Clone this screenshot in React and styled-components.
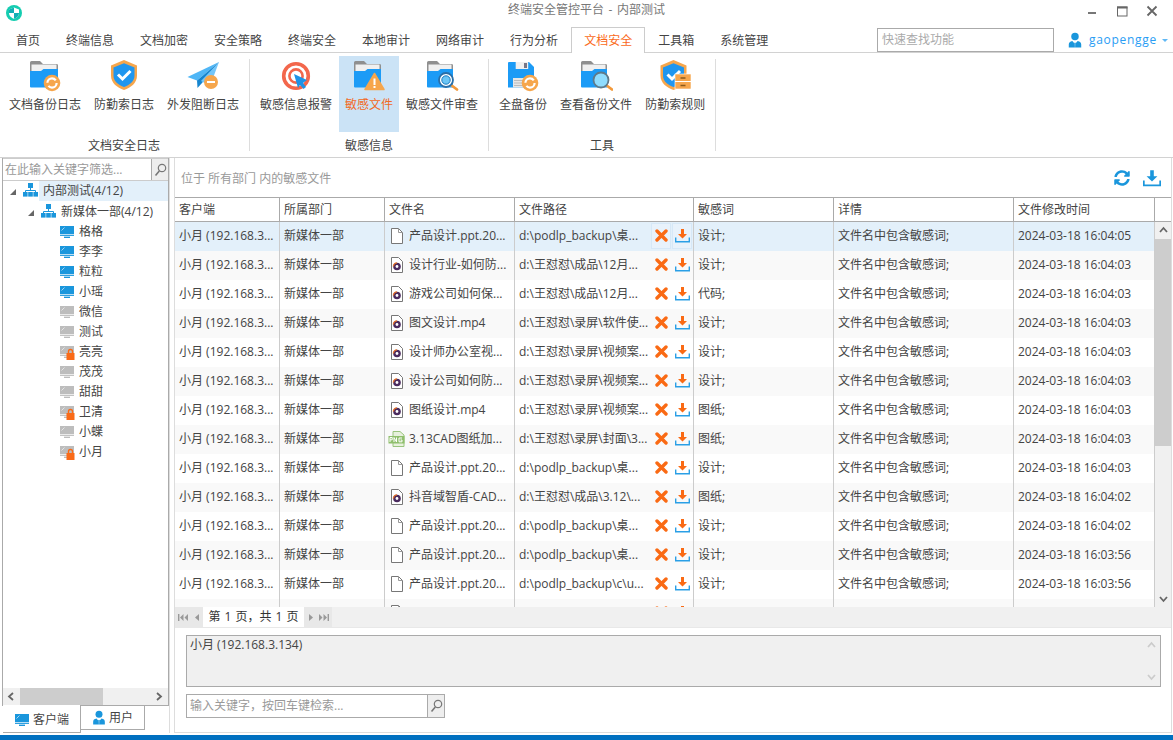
import React from "react";
import styled, { createGlobalStyle } from "styled-components";
import { FaSyncAlt } from "react-icons/fa";

const FONT = `"Open Sans", "Noto Sans CJK SC", sans-serif`;

const Global = createGlobalStyle`
  html, body { margin: 0; padding: 0; background: #fff; overflow: hidden; }
  * { box-sizing: border-box; }
  body { font: 12px/16px ${FONT}; color: #444; }
`;

const Win = styled.div`
  width: 1173px; height: 740px; display: flex; flex-direction: column; background: #fff; overflow: hidden;
`;
const TitleBar = styled.div`
  height: 27px; display: grid; grid-template-columns: 1fr auto 1fr; align-items: start; flex: none;
`;
const TitleLeft = styled.div`padding: 4px 0 0 5px; display: flex;`;
const TitleText = styled.div`color: #777; padding-top: 2px; line-height: 16px; word-spacing: 1.5px;`;
const WinControls = styled.div`display: flex; justify-content: flex-end; padding: 5px 15px 0 0; gap: 18px;`;

const TabBar = styled.div`
  height: 26px; flex: none; display: flex; padding-left: 3px; border-bottom: 1px solid #d2d2d2; position: relative;
`;
const Tab = styled.div`
  padding: 0 ${p => (p.$active ? 12 : 13)}px; height: ${p => (p.$active ? 26 : 25)}px; line-height: 27px; color: ${p => (p.$active ? "#fa6a1a" : "#444")};
  background: #fff;
  ${p => p.$active && `border: 1px solid #ccc; border-bottom: none; line-height: 25px;`}
`;
const TabSpacer = styled.div`flex: 1;`;
const QuickFind = styled.div`
  width: 177px; height: 24px; margin-top: 1px; border: 1px solid #aaa; color: #aaa; padding-left: 4px; line-height: 22px;
`;
const UserBox = styled.div`
  width: 119px; display: flex; padding-left: 13px; gap: 6px; align-items: flex-start; color: #2a9df4; height: 24px; line-height: 26px;
  font-size: 12px; letter-spacing: 0.7px;
`;
const UserIconSlot = styled.span`display: flex; margin-top: 5px; flex: none;`;
const UserCaret = styled.span`
  width: 0; height: 0; border: 3px solid transparent; border-top: 3px solid #5fb8f5; margin: 12px 0 0 -1px;
`;

const Ribbon = styled.div`
  height: 105px; flex: none; display: flex; padding-top: 3px; border-bottom: 1px solid #d2d2d2;
`;
const RibbonGroup = styled.div`
  display: flex; flex-direction: column; height: 92px; margin-top: 3px; padding: 0 4px; border-right: 1px solid #ddd;
  &:first-child { padding-left: 3px; }
`;
const RibbonButtons = styled.div`display: flex; gap: 1px; height: 76px; margin-top: -3px;`;
const RibbonBtn = styled.div`
  padding: 4px 6px 0; display: flex; flex-direction: column; align-items: center; height: 76px;
  color: ${p => (p.$active ? "#f26a25" : "#444")}; background: ${p => (p.$active ? "#cbe3f6" : "transparent")};
`;
const RibbonIcon = styled.svg`width: 34px; height: 32px; margin-bottom: 5px; display: block; flex: none;`;
const RibbonLabel = styled.div`white-space: nowrap; line-height: 16px;`;
const GroupLabel = styled.div`text-align: center; margin-top: 6px; line-height: 16px;`;

const Body = styled.div`flex: 1; display: flex; min-height: 0;`;
const LeftCol = styled.div`
  width: 170px; flex: none; border-right: 1px solid #ddd; display: flex; flex-direction: column; margin-bottom: 2px;
`;
const TreePanel = styled.div`
  flex: 1; margin-left: 2px; border: 1px solid #aaa; border-top: none; display: flex; flex-direction: column; min-height: 0; width: 167px;
`;
const TreeSearch = styled.div`
  height: 23px; display: flex; border: 1px solid #ccc; border-left: none; border-right: none; flex: none;
`;
const TreeSearchText = styled.div`flex: 1; color: #999; padding-left: 2px; line-height: 21px; white-space: nowrap;`;
const SearchBtn = styled.div`
  width: 17px; flex: none; background: #eee; border-left: 1px solid #aaa; display: flex; align-items: center; justify-content: center;
`;
const Tree = styled.div`flex: 1; min-height: 0;`;
const TreeRow = styled.div`
  height: ${p => p.$h || 20}px; display: flex; align-items: flex-start; padding-left: ${p => p.$indent}px; line-height: 20px; white-space: nowrap;
`;
const Twist = styled.span`
  width: 0; height: 0; flex: none; border-style: solid; border-width: 0 0 6px 6px; border-color: transparent transparent #666 transparent; margin: 8px 7px 0 0;
`;
const TreeIconSlot = styled.span`display: flex; flex: none; margin-top: 2px; margin-right: ${p => p.$mr || 0}px;`;
const TreeName = styled.span`
  flex: ${p => (p.$sel ? 1 : "none")}; background: ${p => (p.$sel ? "#e3f0fa" : "transparent")}; height: 20px; padding-left: 4px;
`;
const HScroll = styled.div`
  height: 17px; background: #f0f0f0; display: flex; align-items: center; flex: none;
`;
const HThumb = styled.div`width: 83px; height: 17px; background: #cdcdcd;`;
const ScrollArrowBox = styled.div`
  width: ${p => p.$w || 17}px; height: ${p => p.$h || 17}px; display: flex; align-items: center; justify-content: center; flex: none;
`;
const FlexGap = styled.div`flex: 1;`;
const BottomTabs = styled.div`
  height: 28px; flex: none; display: flex; padding-left: 3px; margin-top: -1px; position: relative; align-items: flex-start;
`;
const BottomTab = styled.div`
  height: ${p => (p.$active ? 28 : 25)}px; width: ${p => (p.$active ? 78 : 64)}px; background: #fff; border: 1px solid #aaa; border-top: ${p => (p.$active ? "none" : "1px solid #aaa")};
  border-left: none; display: flex; align-items: center; justify-content: center; gap: 3px; line-height: 24px;
  padding-top: ${p => (p.$active ? 2 : 0)}px;
`;

const RightCol = styled.div`
  width: 998px; margin: 0 1px 2px 4px; flex: none; border: 1px solid #ddd; border-top: none; display: flex; flex-direction: column; min-height: 0;
`;
const Toolbar = styled.div`
  height: 39px; flex: none; display: flex; align-items: center; padding: 0 10px 0 6px; color: #999;
`;
const ToolbarText = styled.div`flex: 1; padding-top: 2px;`;
const ToolbarIcons = styled.div`display: flex; align-items: center; gap: 13px; color: #1a96dc;`;

const TableWrap = styled.div`height: 410px; flex: none; display: flex; border-top: 1px solid #aaa;`;
const TableMain = styled.div`width: 980px; flex: none; display: flex; flex-direction: column; min-height: 0;`;
const COLS = "105px 105px 130px 179px 140px 180px 141px";
const HeadRow = styled.div`
  height: 24px; flex: none; display: grid; grid-template-columns: ${COLS}; border-bottom: 1px solid #aaa;
`;
const HeadCell = styled.div`border-right: 1px solid #aaa; padding-left: 4px; line-height: 23px; color: #444;`;
const Rows = styled.div`flex: 1; min-height: 0; overflow: hidden;`;
const Row = styled.div`
  height: 29px; display: grid; grid-template-columns: ${COLS};
  background: ${p => (p.$sel ? "#e3f0fa" : p.$alt ? "#f9f9f9" : "#fff")};
`;
const Cell = styled.div`
  border-right: 1px solid #ccc; padding: 0 0 2px 4px; display: flex; align-items: center; white-space: nowrap; overflow: hidden; line-height: 16px;
`;
const FileIconBox = styled.span`width: 20px; flex: none; display: flex; justify-content: flex-start; padding-left: ${p => (p.$wide ? 0 : 1)}px; margin-left: ${p => (p.$wide ? -1 : 0)}px; margin-right: ${p => (p.$wide ? 1 : 0)}px;`;
const PathText = styled.span`flex: 1; min-width: 0; overflow: hidden;`;
const Actions = styled.span`display: flex; flex: none; margin-right: 1px; gap: 1px; height: 26px;`;
const ActionBtn = styled.span`
  width: 20px; height: 26px; display: flex; align-items: center; justify-content: center;
  ${p => p.$on && `background: #e8f2fb; border: 1px solid #d6e8f7;`}
`;
const VScroll = styled.div`
  width: 16px; flex: none; background: #f0f0f0; display: flex; flex-direction: column;
`;
const HeadBlank = styled.div`height: 24px; background: #fff; flex: none; border-bottom: 1px solid #aaa;`;
const VThumb = styled.div`height: 207px; background: #cdcdcd; flex: none;`;

const Pager = styled.div`
  height: 21px; flex: none; background: #f0f0f0; display: flex; align-items: center; border-bottom: 1px solid #e8e8e8;
`;
const PagerBtns = styled.div`
  width: ${p => p.$w}px; height: 20px; background: #e8e8e8; display: flex; align-items: center; justify-content: center; gap: 5px; flex: none;
`;
const PagerText = styled.div`
  width: 101px; height: 20px; background: #fff; text-align: center; line-height: 20px; flex: none; color: #333; white-space: pre; word-spacing: 1px;
`;
const DetailArea = styled.div`flex: 1; padding: 7px 10px 0 11px; display: flex; flex-direction: column; gap: 7px; min-height: 0;`;
const DetailBox = styled.div`
  height: 52px; flex: none; background: #f0f0f0; border: 1px solid #aaa; padding: 1px 0 0 3px; display: flex; line-height: 16px;
`;
const DetailText = styled.div`flex: 1; color: #444;`;
const DetailScroll = styled.div`
  width: 17px; display: flex; flex-direction: column; justify-content: space-between; align-items: center; padding: 4px 0 4px;
`;
const KeywordBox = styled.div`
  width: 259px; height: 24px; flex: none; border: 1px solid #aaa; display: flex;
`;
const KeywordText = styled.div`flex: 1; color: #999; padding-left: 3px; line-height: 22px;`;
const BlueBar = styled.div`height: 5px; flex: none; background: #0070c0;`;

/* ---------- drawings ---------- */
const FolderBase = ({ r = 30 }) => (
  <>
    <path d={`M2 2.5Q2 1 3.5 1H12L15 4H${r - 1}Q${r} 4 ${r} 5.5V12H2Z`} fill="#8f8f8f" />
    <rect x="3.5" y="4.5" width={r - 5} height="7" fill="#f0f0f0" />
    <path d={`M2 11H13L15.5 9H${r}V27.5H3Q2 27.5 2 26.5Z`} fill="#1c9bf6" />
  </>
);
const RefreshBadge = ({ cx, cy }) => (
  <>
    <circle cx={cx} cy={cy} r="8.3" fill="#f6a64c" />
    <circle cx={cx} cy={cy} r="4.6" fill="none" stroke="#fff" strokeWidth="2.2" strokeDasharray="11 3.4" />
  </>
);
const ShieldBase = ({ x = 0 }) => (
  <g transform={`translate(${x} 0)`}>
    <path d="M17 0L30 5.5V15.5C30 23 24 27.5 17 30C10 27.5 4 23 4 15.5V5.5Z" fill="#f6a64c" />
    <path d="M17 3.2L27.5 7.5V15.5C27.5 21.5 22.5 25 17 27C11.5 25 6.5 21.5 6.5 15.5V7.5Z" fill="#1f96ef" />
    <path d="M11 14.5L15.5 19L23.5 11" fill="none" stroke="#fff" strokeWidth="3" />
  </g>
);
const Magnifier = ({ fill, ring, cx, cy, r }) => (
  <>
    <path d={`M${cx + 5} ${cy + 5}L${cx + 11} ${cy + 9.5}`} stroke="#f39a3b" strokeWidth="2.8" strokeLinecap="round" />
    <circle cx={cx} cy={cy} r={r} fill={fill} stroke={ring} strokeWidth="1.8" />
  </>
);
const ribbonIcons = {
  backup: <><FolderBase /><RefreshBadge cx="24" cy="23" /></>,
  shield: <ShieldBase />,
  plane: (
    <>
      <path d="M33 2L1.5 17L11 20.5Z" fill="#4fb6f6" />
      <path d="M33 2L11 20.5L11.5 28L16 23Z" fill="#1585cf" />
      <path d="M33 2L15 21L24 26Z" fill="#74c6f9" />
      <circle cx="25" cy="22" r="7" fill="#f6a64c" />
      <rect x="21" y="21" width="8" height="2" fill="#fff" />
    </>
  ),
  target: (
    <>
      <circle cx="17" cy="16" r="12.3" fill="none" stroke="#f3674c" strokeWidth="3.6" />
      <circle cx="17" cy="16" r="6.6" fill="none" stroke="#f3674c" strokeWidth="2.6" />
      <path d="M15 14L28 20L24 23L27 27L24.5 29L21 25L19 28Z" fill="#1f93e6" />
    </>
  ),
  warn: (
    <>
      <FolderBase r={29} />
      <path d="M22.5 13.5L32 29.5H13Z" fill="#f6a64c" stroke="#f6a64c" strokeWidth="1.5" strokeLinejoin="round" />
      <rect x="21.5" y="18.5" width="2" height="6.5" fill="#fff" />
      <rect x="21.5" y="26" width="2" height="2" fill="#fff" />
    </>
  ),
  review: (
    <>
      <FolderBase r={28} />
      <Magnifier fill="#fff" ring="#2a6fa8" cx={21} cy={20} r={7} />
      <circle cx="21" cy="20" r="4.2" fill="#6cc6f5" stroke="#1c7cc0" strokeWidth="1" />
    </>
  ),
  disk: (
    <>
      <path d="M2 3Q2 2 3 2H23L28 7V27.5H2Z" fill="#1c9bf6" />
      <rect x="9.7" y="2" width="12.5" height="7" fill="#f0f0f0" />
      <rect x="18" y="3" width="3" height="5" fill="#778" />
      <rect x="7" y="18" width="15" height="9.5" fill="#e6e6e6" />
      <path d="M8 20.5H20M8 23H20M8 25.5H20" stroke="#bbb" strokeWidth="1" />
      <RefreshBadge cx="24" cy="23" />
    </>
  ),
  view: (
    <>
      <FolderBase r={28} />
      <Magnifier fill="#8fdcfd" ring="#5f7a8a" cx={22} cy={20} r={7.5} />
    </>
  ),
  rule: (
    <>
      <ShieldBase x={-1.5} />
      <rect x="17" y="14" width="16" height="15" fill="#f6a64c" stroke="#fff" strokeWidth="0.6" />
      <path d="M17 21.5H33" stroke="#fff" strokeWidth="1" />
      <path d="M22.5 18H27.5M22.5 25.5H27.5" stroke="#8a5a1c" strokeWidth="1.4" />
    </>
  )
};
const RibbonPic = ({ name }) => <RibbonIcon viewBox="0 0 34 32">{ribbonIcons[name]}</RibbonIcon>;

const LogoIcon = () => (
  <svg width="18" height="18" viewBox="0 0 18 18">
    <circle cx="9" cy="9" r="8" fill="#14cdb0" />
    <path d="M9 3.5L14 5.5V9C14 12 11.5 13.8 9 14.8C6.5 13.8 4 12 4 9V5.5Z" fill="#fff" />
    <path d="M9 3.5V9H4V5.5ZM9 9H14C14 12 11.5 13.8 9 14.8Z" fill="#12aeb5" />
  </svg>
);
const MinIcon = () => <svg width="12" height="18" viewBox="0 0 12 18"><rect x="2" y="7" width="8" height="2" fill="#777" /></svg>;
const MaxIcon = () => <svg width="12" height="18" viewBox="0 0 12 18"><rect x="1.5" y="2" width="9.5" height="9" fill="none" stroke="#666" strokeWidth="1" /><rect x="1" y="1.5" width="10.5" height="2" fill="#666" /></svg>;
const CloseIcon = () => <svg width="12" height="18" viewBox="0 0 12 18"><path d="M1.5 1.5L10.5 10.5M10.5 1.5L1.5 10.5" stroke="#666" strokeWidth="1.8" /></svg>;

const PersonIcon = ({ size = 16, w = 16 }) => (
  <svg width={w} height={size} viewBox="0 0 16 18">
    <circle cx="8" cy="5" r="4.2" fill="#1a96dc" />
    <path d="M1 17.5V14Q1 11 5 10.2L7 12.5V17.5ZM15 17.5V14Q15 11 11 10.2L9 12.5V17.5Z" fill="#1a96dc" />
    <path d="M7.2 12H8.8L9 17.5H7Z" fill="#1a96dc" />
  </svg>
);
const OrgIcon = () => (
  <svg width="15" height="14" viewBox="0 0 15 14">
    <rect x="5" y="0" width="5" height="5" fill="#1a96dc" />
    <path d="M7.5 5V7.5M2.5 9V7.5H12.5V9" stroke="#1a96dc" strokeWidth="1" fill="none" />
    <rect x="0" y="9" width="4.6" height="4.6" fill="#1a96dc" />
    <rect x="5.2" y="9" width="4.6" height="4.6" fill="#1a96dc" />
    <rect x="10.4" y="9" width="4.6" height="4.6" fill="#1a96dc" />
  </svg>
);
const MonitorIcon = ({ on, lock }) => {
  const c = on ? "#1a96dc" : "#bdbdbd";
  return (
    <svg width="16" height="16" viewBox="0 0 16 16" style={{ flex: "none" }}>
      <rect x="1" y="2" width="14" height="8" fill={c} />
      <path d="M2.5 6.5L5.5 3.5" stroke="#fff" strokeOpacity="0.6" strokeWidth="1" />
      <rect x="1" y="10.7" width="14" height="1.2" fill={c} />
      <rect x="5" y="12.6" width="6" height="1.4" fill={c} />
      {lock && (
        <>
          <rect x="7.5" y="9" width="8" height="7" fill="#f96a17" />
          <path d="M9.5 9.5V7.5A2 2 0 0 1 13.5 7.5V9.5" fill="none" stroke="#f96a17" strokeWidth="1.4" />
        </>
      )}
    </svg>
  );
};
const DocIcon = () => (
  <svg width="14" height="18" viewBox="0 0 14 18">
    <path d="M1.5 1.5H8.5L12.5 5.5V16.5H1.5Z" fill="#fff" stroke="#777" strokeWidth="1" />
    <path d="M8.5 1.5V5.5H12.5" fill="none" stroke="#999" strokeWidth="1" />
  </svg>
);
const MediaIcon = () => (
  <svg width="14" height="18" viewBox="0 0 14 18">
    <path d="M1.5 1.5H8.5L12.5 5.5V16.5H1.5Z" fill="#fff" stroke="#777" strokeWidth="1" />
    <circle cx="7" cy="10.5" r="3.8" fill="#4a2a5e" />
    <path d="M3.4 10.5A3.6 3.6 0 0 1 7 6.9" fill="none" stroke="#e8742a" strokeWidth="1.4" />
    <circle cx="7" cy="10.5" r="1.4" fill="#fff" />
  </svg>
);
const PngIcon = () => (
  <svg width="18" height="16" viewBox="0 0 18 16">
    <path d="M5 0.5H12L16 4V15.5H5Z" fill="#e7f1dc" stroke="#9ac47e" strokeWidth="1" />
    <rect x="0.5" y="5" width="16" height="7.5" fill="#8fbf6c" />
    <path d="M2 11V6.5H4.2V8.8H2M6 11V6.5L8.5 11V6.5M14 7H11V10.8H14V9H12.5" fill="none" stroke="#fff" strokeWidth="1" />
  </svg>
);
const XIcon = () => (
  <svg width="13" height="13" viewBox="0 0 13 13">
    <path d="M2 2L11 11M11 2L2 11" stroke="#fa6a14" strokeWidth="3.4" strokeLinecap="round" />
  </svg>
);
const DownIcon = ({ arrow = "#fa6a14", tray = "#2a9fe6", size = 15 }) => (
  <svg width={size} height={size} viewBox="0 0 15 15">
    <path d="M6 1H9V6H12L7.5 10.5L3 6H6Z" fill={arrow} />
    <path d="M0.7 9.5V13.7H14.3V9.5" fill="none" stroke={tray} strokeWidth="1.4" />
  </svg>
);
const SearchIcon = () => (
  <svg width="13" height="14" viewBox="0 0 13 14">
    <circle cx="8" cy="5" r="3.7" fill="none" stroke="#777" strokeWidth="1.2" />
    <path d="M5.3 8L1.5 12.5" stroke="#777" strokeWidth="1.6" />
  </svg>
);
const Chevron = ({ dir, color = "#666" }) => {
  const d = { l: "M6 1L2 4.5L6 8", r: "M2 1L6 4.5L2 8", u: "M1 6L4.5 2L8 6", d: "M1 2L4.5 6L8 2" }[dir];
  return <svg width="9" height="9" viewBox="0 0 9 9"><path d={d} fill="none" stroke={color} strokeWidth="1.8" /></svg>;
};
const PagerGlyph = ({ kind }) => {
  const shapes = {
    first: <><rect x="0" y="1" width="1.4" height="7" /><path d="M5.5 1V8L2 4.5ZM10 1V8L6.5 4.5Z" /></>,
    prev: <path d="M6 1V8L2 4.5Z" />,
    next: <path d="M2 1V8L6 4.5Z" />,
    last: <><path d="M0 1V8L3.5 4.5ZM4.5 1V8L8 4.5Z" /><rect x="8.6" y="1" width="1.4" height="7" /></>
  };
  const w = kind === "first" || kind === "last" ? 10 : 7;
  return <svg width={w} height="9" viewBox={`0 0 ${w} 9`} fill="#999">{shapes[kind]}</svg>;
};

/* ---------- data ---------- */
const tabs = ["首页", "终端信息", "文档加密", "安全策略", "终端安全", "本地审计", "网络审计", "行为分析", "文档安全", "工具箱", "系统管理"];
const groups = [
  { label: "文档安全日志", items: [["backup", "文档备份日志"], ["shield", "防勤索日志"], ["plane", "外发阻断日志"]] },
  { label: "敏感信息", items: [["target", "敏感信息报警"], ["warn", "敏感文件", true], ["review", "敏感文件审查"]] },
  { label: "工具", items: [["disk", "全盘备份"], ["view", "查看备份文件"], ["rule", "防勤索规则"]] }
];
const clients = [
  ["格格", 1], ["李李", 1], ["粒粒", 1], ["小瑶", 1], ["微信"], ["测试"], ["亮亮", 0, 1], ["茂茂"], ["甜甜"], ["卫清", 0, 1], ["小蝶"], ["小月", 0, 1]
];
const heads = ["客户端", "所属部门", "文件名", "文件路径", "敏感词", "详情", "文件修改时间"];
const PB = "d:\\podlp_backup\\桌...";
const DOC = "产品设计.ppt.20...";
const rows = [
  ["doc", DOC, PB, "设计;", "16:04:05"],
  ["media", "设计行业-如何防...", "d:\\王怼怼\\成品\\12月...", "设计;", "16:04:03"],
  ["media", "游戏公司如何保...", "d:\\王怼怼\\成品\\12月...", "代码;", "16:04:03"],
  ["media", "图文设计.mp4", "d:\\王怼怼\\录屏\\软件使...", "设计;", "16:04:03"],
  ["media", "设计师办公室视...", "d:\\王怼怼\\录屏\\视频案...", "设计;", "16:04:03"],
  ["media", "设计公司如何防...", "d:\\王怼怼\\录屏\\视频案...", "设计;", "16:04:03"],
  ["media", "图纸设计.mp4", "d:\\王怼怼\\录屏\\视频案...", "图纸;", "16:04:03"],
  ["png", "3.13CAD图纸加...", "d:\\王怼怼\\录屏\\封面\\3...", "图纸;", "16:04:03"],
  ["doc", DOC, PB, "设计;", "16:04:03"],
  ["media", "抖音域智盾-CAD...", "d:\\王怼怼\\成品\\3.12\\...", "图纸;", "16:04:02"],
  ["doc", DOC, PB, "设计;", "16:04:02"],
  ["doc", DOC, PB, "设计;", "16:03:56"],
  ["doc", DOC, "d:\\podlp_backup\\c\\u...", "设计;", "16:03:56"]
];
const fileIcons = { doc: <DocIcon />, media: <MediaIcon />, png: <PngIcon /> };
const RowActions = ({ on }) => (
  <Actions>
    <ActionBtn $on={on}><XIcon /></ActionBtn>
    <ActionBtn $on={on}><DownIcon /></ActionBtn>
  </Actions>
);

export default function App() {
  return (
    <Win>
      <Global />
      <TitleBar>
        <TitleLeft><LogoIcon /></TitleLeft>
        <TitleText>终端安全管控平台 - 内部测试</TitleText>
        <WinControls><MinIcon /><MaxIcon /><CloseIcon /></WinControls>
      </TitleBar>
      <TabBar>
        {tabs.map(t => <Tab key={t} $active={t === "文档安全"}>{t}</Tab>)}
        <TabSpacer />
        <QuickFind>快速查找功能</QuickFind>
        <UserBox>
          <UserIconSlot><PersonIcon /></UserIconSlot>
          <span>gaopengge</span>
          <UserCaret />
        </UserBox>
      </TabBar>
      <Ribbon>
        {groups.map(g => (
          <RibbonGroup key={g.label}>
            <RibbonButtons>
              {g.items.map(([icon, label, active]) => (
                <RibbonBtn key={label} $active={active}>
                  <RibbonPic name={icon} />
                  <RibbonLabel>{label}</RibbonLabel>
                </RibbonBtn>
              ))}
            </RibbonButtons>
            <GroupLabel>{g.label}</GroupLabel>
          </RibbonGroup>
        ))}
      </Ribbon>
      <Body>
        <LeftCol>
          <TreePanel>
            <TreeSearch>
              <TreeSearchText>在此输入关键字筛选...</TreeSearchText>
              <SearchBtn><SearchIcon /></SearchBtn>
            </TreeSearch>
            <Tree>
              <TreeRow $indent={7} $h={21}>
                <Twist /><TreeIconSlot $mr={1}><OrgIcon /></TreeIconSlot><TreeName $sel>内部测试(4/12)</TreeName>
              </TreeRow>
              <TreeRow $indent={25}>
                <Twist /><TreeIconSlot $mr={1}><OrgIcon /></TreeIconSlot><TreeName>新媒体一部(4/12)</TreeName>
              </TreeRow>
              {clients.map(([n, on, lock]) => (
                <TreeRow key={n} $indent={56}>
                  <TreeIconSlot><MonitorIcon on={on} lock={lock} /></TreeIconSlot><TreeName>{n}</TreeName>
                </TreeRow>
              ))}
            </Tree>
            <HScroll>
              <ScrollArrowBox><Chevron dir="l" /></ScrollArrowBox>
              <HThumb />
              <FlexGap />
              <ScrollArrowBox><Chevron dir="r" /></ScrollArrowBox>
            </HScroll>
          </TreePanel>
          <BottomTabs>
            <BottomTab $active><MonitorIcon on />客户端</BottomTab>
            <BottomTab><PersonIcon size={15} w={14} />用户</BottomTab>
          </BottomTabs>
        </LeftCol>
        <RightCol>
          <Toolbar>
            <ToolbarText>位于 所有部门 内的敏感文件</ToolbarText>
            <ToolbarIcons>
              <FaSyncAlt size={16} />
              <DownIcon arrow="#1a96dc" tray="#1a96dc" size={18} />
            </ToolbarIcons>
          </Toolbar>
          <TableWrap>
            <TableMain>
              <HeadRow>{heads.map(h => <HeadCell key={h}>{h}</HeadCell>)}</HeadRow>
              <Rows>
                {rows.map((r, i) => (
                  <Row key={i} $sel={i === 0} $alt={i % 2 === 1}>
                    <Cell>小月 (192.168.3...</Cell>
                    <Cell>新媒体一部</Cell>
                    <Cell><FileIconBox $wide={r[0] === "png"}>{fileIcons[r[0]]}</FileIconBox>{r[1]}</Cell>
                    <Cell>
                      <PathText>{r[2]}</PathText>
                      <RowActions on={i === 0} />
                    </Cell>
                    <Cell>{r[3]}</Cell>
                    <Cell>文件名中包含敏感词;</Cell>
                    <Cell>2024-03-18 {r[4]}</Cell>
                  </Row>
                ))}
                <Row $alt>
                  <Cell />
                  <Cell />
                  <Cell><FileIconBox><DocIcon /></FileIconBox></Cell>
                  <Cell><PathText /><RowActions /></Cell>
                  <Cell />
                  <Cell />
                  <Cell />
                </Row>
              </Rows>
            </TableMain>
            <VScroll>
              <HeadBlank />
              <ScrollArrowBox $w={16}><Chevron dir="u" /></ScrollArrowBox>
              <VThumb />
              <FlexGap />
              <ScrollArrowBox $w={16} $h={16}><Chevron dir="d" /></ScrollArrowBox>
            </VScroll>
          </TableWrap>
          <Pager>
            <PagerBtns $w={28}><PagerGlyph kind="first" /><PagerGlyph kind="prev" /></PagerBtns>
            <PagerText>第 1 页，共 1 页</PagerText>
            <PagerBtns $w={28}><PagerGlyph kind="next" /><PagerGlyph kind="last" /></PagerBtns>
          </Pager>
          <DetailArea>
            <DetailBox>
              <DetailText>小月 (192.168.3.134)</DetailText>
              <DetailScroll><Chevron dir="u" color="#ccc" /><Chevron dir="d" color="#ccc" /></DetailScroll>
            </DetailBox>
            <KeywordBox>
              <KeywordText>输入关键字，按回车键检索...</KeywordText>
              <SearchBtn><SearchIcon /></SearchBtn>
            </KeywordBox>
          </DetailArea>
        </RightCol>
      </Body>
      <BlueBar />
    </Win>
  );
}
